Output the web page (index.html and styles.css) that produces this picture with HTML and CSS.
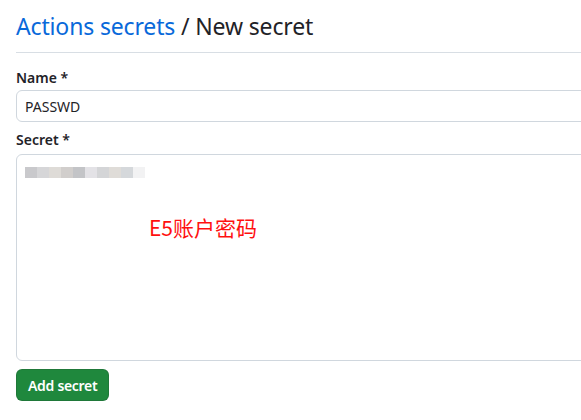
FILE: index.html
```html
<!DOCTYPE html>
<html lang="en">
<head>
<meta charset="utf-8">
<title>New secret</title>
<link rel="stylesheet" href="styles.css">
</head>
<body>
<div class="page">
  <h2 class="title"><a class="crumb" href="#">Actions secrets</a> / New secret</h2>
  <form class="form">
    <div class="field">
      <label class="label" for="name">Name *</label>
      <input class="input" id="name" type="text" value="PASSWD">
    </div>
    <div class="field">
      <label class="label">Secret *</label>
      <div class="textarea">
        <div class="blur">
          <span class="b b1"></span><span class="b b2"></span><span class="b b3"></span><span class="b b4"></span><span class="b b5"></span><span class="b b6"></span><span class="b b7"></span><span class="b b8"></span><span class="b b9"></span><span class="b b10"></span>
        </div>
        <span class="note">E5账户密码</span>
      </div>
    </div>
    <button class="btn" type="button">Add secret</button>
  </form>
</div>
</body>
</html>
```

FILE: styles.css
```css
html, body {
  margin: 0;
  padding: 0;
  background: #ffffff;
  overflow: hidden;
}
body {
  font-family: "Noto Sans", "Open Sans", "Liberation Sans", sans-serif;
  color: #1f2328;
}
.page {
  width: 565px;
  padding: 0 0 0 16px;
}
.form {
  width: 640px;
  display: flex;
  flex-direction: column;
  align-items: flex-start;
}
.title {
  margin: 0;
  padding: 8px 0 8px;
  font-size: 23px;
  line-height: 36px;
  letter-spacing: -0.15px;
  font-weight: 400;
  border-bottom: 1px solid #d8dee4;
  color: #1f2328;
}
.crumb {
  color: #0969da;
  text-decoration: none;
}
.field {
  display: flex;
  flex-direction: column;
  width: 100%;
  margin-top: 14px;
}
.field + .field {
  margin-top: 7px;
}
.label {
  font-size: 14px;
  line-height: 21px;
  font-weight: 600;
  margin-bottom: 2px;
}
.input {
  box-sizing: border-box;
  height: 32px;
  width: 100%;
  margin: 0;
  padding: 0 8px;
  font-family: inherit;
  font-size: 14px;
  color: #1f2328;
  border: 1px solid #d0d7de;
  border-radius: 6px;
  outline: none;
  background: #ffffff;
}
.textarea {
  position: relative;
  box-sizing: border-box;
  height: 207px;
  width: 100%;
  margin-top: 2px;
  padding: 12px 8px;
  border: 1px solid #d0d7de;
  border-radius: 6px;
}
.blur {
  display: flex;
  height: 11px;
  filter: blur(0.6px);
}
.b { width: 12px; height: 11px; }
.b1 { background: #c9c9cc; }
.b2 { background: #d6d6d8; }
.b3 { background: #dedbd7; }
.b4 { background: #d1cecc; }
.b5 { background: #c3c4c7; }
.b6 { background: #e3e2e6; }
.b7 { background: #d4d5d7; }
.b8 { background: #dfdcd8; }
.b9 { background: #d5d8db; }
.b10 { background: #f2f2f3; }
.note {
  position: absolute;
  left: 132px;
  top: 62px;
  font-family: "Noto Sans CJK SC", "Noto Sans", sans-serif;
  font-size: 21px;
  line-height: 21px;
  color: #ff1010;
}
.btn {
  margin-top: 8px;
  height: 32px;
  padding: 0 11px;
  font-family: inherit;
  font-size: 14px;
  font-weight: 600;
  letter-spacing: -0.3px;
  color: #ffffff;
  background: #1f883d;
  border: 1px solid rgba(31, 35, 40, 0.15);
  border-radius: 6px;
}
```
